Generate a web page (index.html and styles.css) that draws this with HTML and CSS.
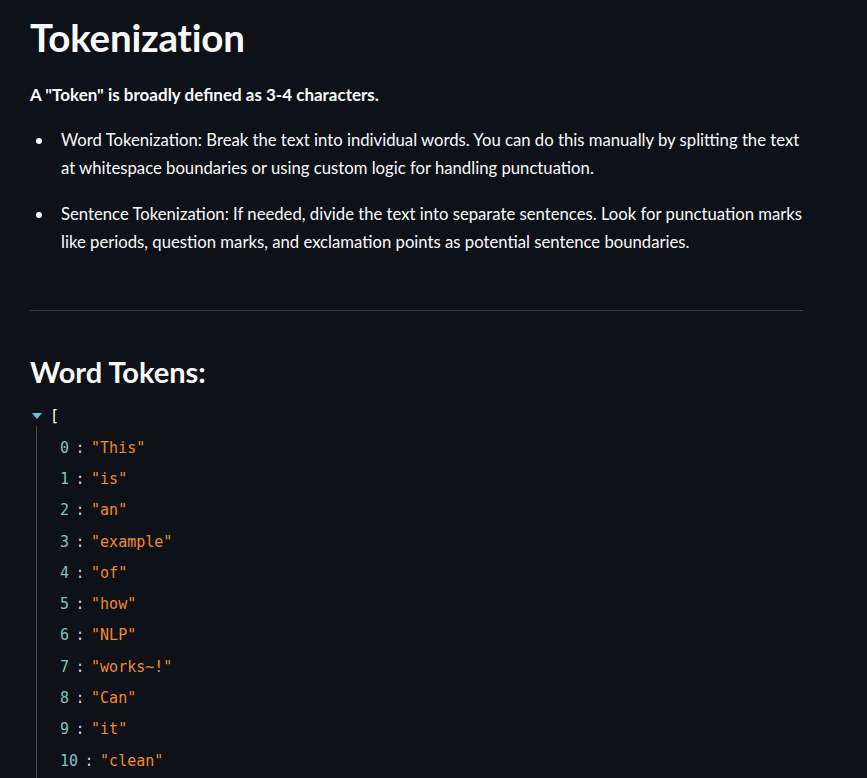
FILE: index.html
```html
<!DOCTYPE html>
<html lang="en">
<head>
<meta charset="utf-8">
<title>Tokenization</title>
<link rel="stylesheet" href="styles.css">
</head>
<body>
<main class="main">
  <h1 class="title">Tokenization</h1>
  <p class="lead">A "Token" is broadly defined as 3-4 characters.</p>
  <ul class="bullets">
    <li>Word Tokenization: Break the text into individual words. You can do this manually by splitting the text at whitespace boundaries or using custom logic for handling punctuation.</li>
    <li>Sentence Tokenization: If needed, divide the text into separate sentences. Look for punctuation marks like periods, question marks, and exclamation points as potential sentence boundaries.</li>
  </ul>
  <hr class="rule">
  <h2 class="subtitle">Word Tokens:</h2>
  <div class="json">
    <div class="json-head"><span class="caret"></span><span class="bracket">[</span></div>
    <div class="json-body">
      <div class="row"><span class="key">0</span><span class="colon">:</span><span class="str">"This"</span></div>
      <div class="row"><span class="key">1</span><span class="colon">:</span><span class="str">"is"</span></div>
      <div class="row"><span class="key">2</span><span class="colon">:</span><span class="str">"an"</span></div>
      <div class="row"><span class="key">3</span><span class="colon">:</span><span class="str">"example"</span></div>
      <div class="row"><span class="key">4</span><span class="colon">:</span><span class="str">"of"</span></div>
      <div class="row"><span class="key">5</span><span class="colon">:</span><span class="str">"how"</span></div>
      <div class="row"><span class="key">6</span><span class="colon">:</span><span class="str">"NLP"</span></div>
      <div class="row"><span class="key">7</span><span class="colon">:</span><span class="str">"works~!"</span></div>
      <div class="row"><span class="key">8</span><span class="colon">:</span><span class="str">"Can"</span></div>
      <div class="row"><span class="key">9</span><span class="colon">:</span><span class="str">"it"</span></div>
      <div class="row"><span class="key">10</span><span class="colon">:</span><span class="str">"clean"</span></div>
    </div>
  </div>
</main>
</body>
</html>
```

FILE: styles.css
```css
html, body {
  margin: 0;
  padding: 0;
  background: #0e1117;
  height: 100%;
  overflow: hidden;
}

body {
  color: #fafafa;
  font-family: Lato, "Noto Sans", sans-serif;
  font-size: 16.7px;
}

.main {
  width: 773px;
  padding: 11px 0 0 30px;
}

.title {
  margin: 0;
  font-size: 38.5px;
  font-weight: 700;
  line-height: 52px;
  letter-spacing: -0.2px;
}

.lead {
  margin: 19px 0 0 0;
  font-size: 17px;
  font-weight: 700;
  line-height: 26px;
}

.bullets {
  margin: 18px 0 0 0;
  padding: 0 0 0 31px;
  list-style: none;
}

.bullets li {
  position: relative;
  line-height: 28px;
  margin-bottom: 18px;
}

.bullets li::before {
  content: "";
  position: absolute;
  left: -25px;
  top: 12px;
  width: 6px;
  height: 6px;
  border-radius: 50%;
  background: #fafafa;
}

.rule {
  margin: 54px 0 0 0;
  border: 0;
  height: 1px;
  background: #3c3e44;
}

.subtitle {
  margin: 41px 0 0 0;
  font-size: 29px;
  font-weight: 700;
  line-height: 40px;
}

.json {
  margin-top: 14px;
  font-family: "DejaVu Sans Mono", monospace;
  font-size: 15px;
}

.json-head {
  display: flex;
  align-items: center;
  height: 20px;
}

.caret {
  width: 0;
  height: 0;
  margin: 0 8px 0 2px;
  border-left: 5px solid transparent;
  border-right: 5px solid transparent;
  border-top: 6px solid #5ec8e6;
}

.bracket {
  color: #fafafa;
}

.json-body {
  margin-left: 6px;
  border-left: 1px solid #4a4740;
  padding: 6px 0 2px 23px;
}

.row {
  height: 31.3px;
  display: flex;
  align-items: center;
}

.key {
  color: #7ec4bf;
}

.colon {
  color: #cfcfcf;
  margin: 0 6.5px;
}

.str {
  color: #f08a2c;
}
```
